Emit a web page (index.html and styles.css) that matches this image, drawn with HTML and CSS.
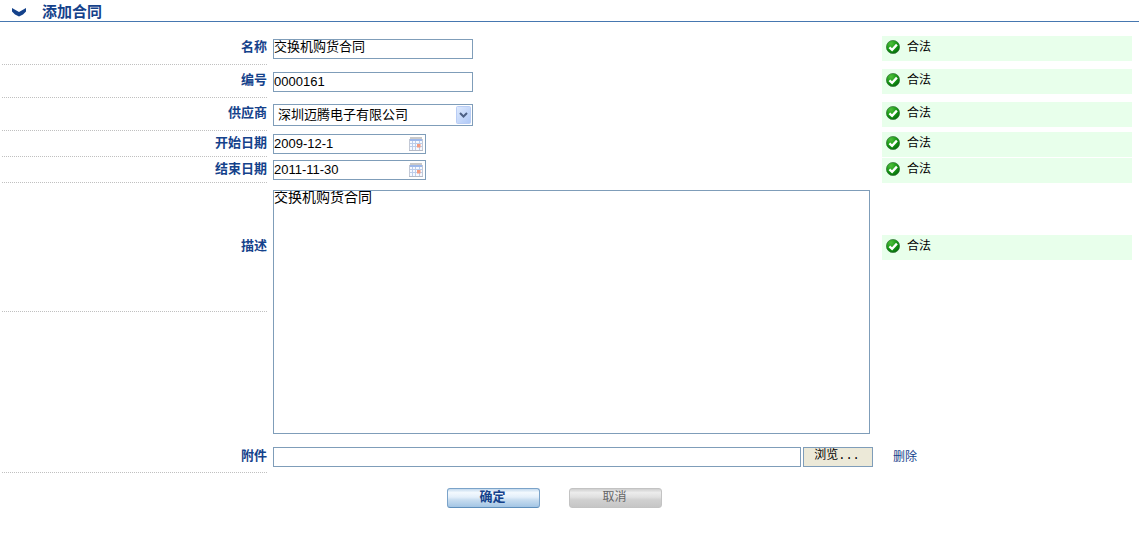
FILE: index.html
```html
<!DOCTYPE html>
<html lang="zh-CN">

<head>
    <meta charset="utf-8">
    <meta name="viewport" content="width=device-width, initial-scale=1">
    <title>添加合同</title>
    <link rel="stylesheet" href="styles.css">
</head>

<body>
    <svg class="defs" width="0" height="0" aria-hidden="true">
        <defs>
            <radialGradient id="green" cx="0.35" cy="0.25" r="0.8">
                <stop offset="0" stop-color="#4fbf3c" />
                <stop offset="0.6" stop-color="#139412" />
                <stop offset="1" stop-color="#056a0c" />
            </radialGradient>
            <linearGradient id="blue" x1="0" y1="0" x2="1" y2="1">
                <stop offset="0" stop-color="#dfeafd" />
                <stop offset="1" stop-color="#aec8f7" />
            </linearGradient>
            <symbol id="ok" viewBox="0 0 14 14">
                <circle cx="7" cy="7" r="6.6" fill="url(#green)" stroke="#35743a" stroke-width="0.7" />
                <path d="M3.4 7.3L6.1 9.8L10.9 4.6" fill="none" stroke="#fff" stroke-width="2.3" />
            </symbol>
            <symbol id="calendar" viewBox="0 0 14 14">
                <path d="M1 1H13L14 13.5H0Z" fill="#f6f9ff" />
                <path d="M1 0H13V2H1Z" fill="#c9c9c9" />
                <path d="M1 2H13L13.3 4H0.7Z" fill="#9db8ea" />
                <path d="M1 6.5H13M0.5 9.5H13.5M3.5 4V13M6.5 4V13M10.5 4V13" stroke="#bccdea" stroke-width="1" />
                <path d="M0.5 2V13.5M13.5 2V13.5" stroke="#c3c9d6" />
                <path d="M0 13.5H14" stroke="#b5bac6" />
                <rect x="8" y="7" width="3.5" height="3.5" fill="#f39b80" />
            </symbol>
        </defs>
    </svg>

    <h1 class="title">
        <svg class="chevron" width="16" height="11" viewBox="0 0 16 11">
            <path d="M1 2L8 6L15 2V5.5L12 8.5L8 10.5L4 8.5L1 5.5Z" fill="#15428b" />
        </svg>
        添加合同
    </h1>

    <form class="form">
        <div class="row">
            <label class="label" for="name">名称</label>
            <div class="field"><input class="text text-high" id="name" type="text" value="交换机购货合同"></div>
            <div class="status"><svg class="ok"><use href="#ok" /></svg>合法</div>
        </div>
        <div class="row">
            <label class="label" for="number">编号</label>
            <div class="field"><input class="text" id="number" type="text" value="0000161"></div>
            <div class="status"><svg class="ok"><use href="#ok" /></svg>合法</div>
        </div>
        <div class="row">
            <label class="label" for="supplier">供应商</label>
            <div class="field">
                <div class="select-box">
                    <select class="select" id="supplier">
                        <option>深圳迈腾电子有限公司</option>
                    </select>
                    <svg class="arrow" width="15" height="18" viewBox="0 0 15 18">
                        <rect x="0.5" y="0.5" width="14" height="17" rx="1" fill="url(#blue)" stroke="#b9cdf5" />
                        <path d="M4 7L7.5 10.5L11 7" fill="none" stroke="#4d6185" stroke-width="2" />
                    </svg>
                </div>
            </div>
            <div class="status"><svg class="ok"><use href="#ok" /></svg>合法</div>
        </div>
        <div class="row row-date">
            <label class="label" for="start">开始日期</label>
            <div class="field">
                <div class="date-box">
                    <input class="text" id="start" type="text" value="2009-12-1">
                    <svg class="calendar"><use href="#calendar" /></svg>
                </div>
            </div>
            <div class="status"><svg class="ok"><use href="#ok" /></svg>合法</div>
        </div>
        <div class="row row-date">
            <label class="label" for="end">结束日期</label>
            <div class="field">
                <div class="date-box">
                    <input class="text" id="end" type="text" value="2011-11-30">
                    <svg class="calendar"><use href="#calendar" /></svg>
                </div>
            </div>
            <div class="status"><svg class="ok"><use href="#ok" /></svg>合法</div>
        </div>
        <div class="row row-desc">
            <label class="label" for="desc">描述</label>
            <div class="field"><textarea class="textarea" id="desc">交换机购货合同</textarea></div>
            <div class="status"><svg class="ok"><use href="#ok" /></svg>合法</div>
        </div>
        <div class="row row-file">
            <label class="label" for="file">附件</label>
            <div class="field">
                <input class="text" id="file" type="text">
                <button class="browse" type="button">浏览...</button>
            </div>
            <a class="delete" href="#">删除</a>
        </div>
        <div class="actions">
            <button class="btn btn-ok" type="submit">确定</button>
            <button class="btn btn-cancel" type="button">取消</button>
        </div>
    </form>
</body>

</html>
```

FILE: styles.css
```css
* {
    box-sizing: border-box;
}

body {
    margin: 0;
    background: #fff;
    color: #000;
    font-family: "Liberation Sans", "Noto Sans CJK SC", sans-serif;
    font-size: 13px;
}

input,
select,
textarea,
button {
    margin: 0;
    font-family: inherit;
    font-size: 13px;
    color: #000;
}

.defs {
    position: absolute;
}

.title {
    display: flex;
    align-items: center;
    gap: 15px;
    height: 22px;
    margin: 0 0 10px;
    padding: 2px 0 0 11px;
    border-bottom: 1px solid #4677b0;
    color: #15428b;
    font-size: 15px;
    line-height: 18px;
}

.form {
    padding: 0 7px 0 2px;
}

.row {
    display: grid;
    grid-template-columns: 265px 1fr 250px;
    column-gap: 6px;
    min-height: 33px;
}

.label {
    display: flex;
    align-items: center;
    justify-content: flex-end;
    padding-bottom: 2px;
    border-bottom: 1px dotted #c0c0c0;
    color: #15428b;
    font-weight: bold;
    line-height: 16px;
}

.field {
    display: flex;
    align-items: center;
    gap: 2px;
}

.text {
    width: 200px;
    height: 20px;
    padding: 0 0 1px;
    border: 1px solid #7f9db9;
    background: #fff;
}

.text-high {
    padding-bottom: 6px;
}

.select-box,
.date-box {
    position: relative;
    width: 200px;
}

.select {
    display: block;
    width: 100%;
    height: 22px;
    padding: 0 18px 0 4px;
    border: 1px solid #7f9db9;
    border-radius: 0;
    background: #fff;
    appearance: none;
}

.arrow {
    position: absolute;
    top: 2px;
    right: 2px;
    pointer-events: none;
}

.date-box {
    width: 153px;
}

.date-box .text {
    display: block;
    width: 100%;
}

.calendar {
    position: absolute;
    top: 3px;
    right: 3px;
    width: 14px;
    height: 14px;
}

.status {
    display: flex;
    gap: 7px;
    height: 25px;
    margin-top: 4px;
    padding: 4px;
    background: #e8ffeb;
    font-size: 12px;
    line-height: 14px;
}

.ok {
    width: 14px;
    height: 14px;
}

.row-date {
    min-height: 26px;
}

.row-date .status {
    margin-top: 1px;
}

.row-desc .label {
    height: 129px;
}

.row-desc .field {
    padding: 7px 6px 7px 0;
}

.row-desc .status {
    margin-top: 52px;
}

.textarea {
    display: block;
    width: 100%;
    height: 244px;
    padding: 0;
    border: 1px solid #7f9db9;
    font-size: 14px;
    line-height: 12px;
    resize: none;
}

.row-file {
    min-height: 32px;
}

.row-file .field {
    padding-right: 3px;
}

.row-file .text {
    flex: 1;
}

.browse {
    width: 70px;
    height: 20px;
    padding: 0 2px 2px 0;
    border: 1px solid #7f9db9;
    background: #ece9d8;
    font-family: "Liberation Mono", "Noto Sans CJK SC", monospace;
    font-size: 12px;
    line-height: 16px;
}

.delete {
    align-self: center;
    justify-self: start;
    padding-left: 11px;
    color: #15428b;
    font-size: 12px;
    line-height: 16px;
    text-decoration: none;
}

.actions {
    display: flex;
    justify-content: center;
    gap: 29px;
    padding: 15px 25px 0 0;
}

.btn {
    width: 93px;
    height: 20px;
    padding: 0 2px 3px 0;
    border: 1px solid;
    border-radius: 3px;
    line-height: 16px;
}

.btn-ok {
    border-color: #7ba3c9 #7ba3c9 #5f8fbc;
    background: linear-gradient(#c4daee, #f3f9fe 20%, #e3effa 45%, #c8ddf0 60%, #a3c5e4);
    color: #15428b;
    font-weight: bold;
}

.btn-cancel {
    border-color: #c3c3c3;
    background: linear-gradient(#cfcfcf, #ececec 20%, #e0e0e0 45%, #d0d0d0 60%, #c6c6c6);
    color: #666;
    font-size: 12px;
}
```
